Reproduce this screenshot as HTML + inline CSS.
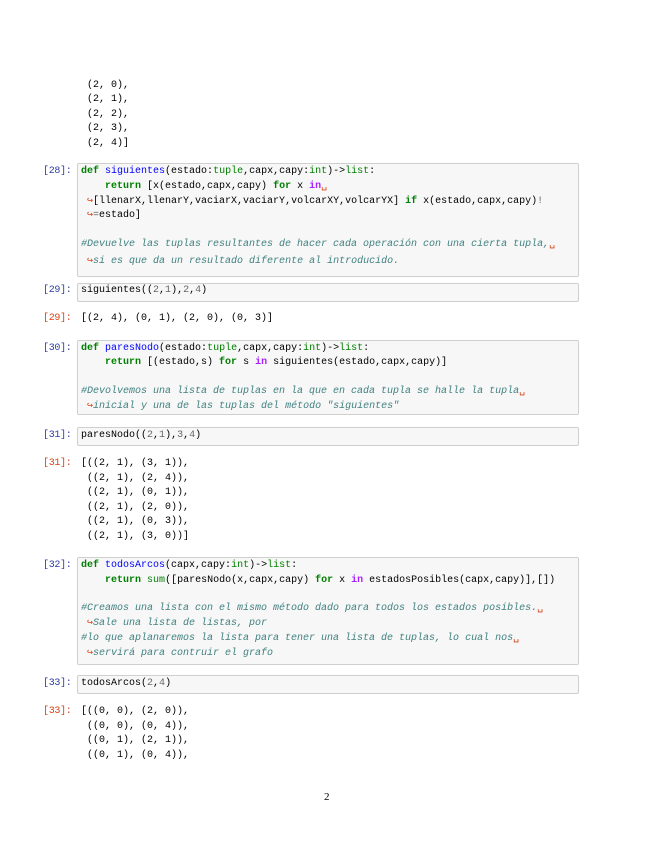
<!DOCTYPE html>
<html><head><meta charset="utf-8"><style>
body{margin:0;width:655px;height:848px;background:#fff;position:relative;font-family:"Liberation Mono",monospace;font-size:10px;color:#000}
.l{position:absolute;left:81px;line-height:14px;white-space:pre}
.p{position:absolute;left:43px;line-height:14px;white-space:pre;color:#303F9F;letter-spacing:-0.3px}
.o{color:#D84315}
.b{position:absolute;left:77px;width:500px;background:#f7f7f7;border:1px solid #cfcfcf;border-radius:2px}
.k{color:#008000;font-weight:bold}
.f{color:#0000FF}
.bi{color:#008000}
.n{color:#666}
.i{color:#AA22FF;font-weight:bold}
.c{color:#408080;font-style:italic}
.a{color:#d84315}
</style></head><body>
<div class="l" style="top:79px"> (2, 0),</div>
<div class="l" style="top:93px"> (2, 1),</div>
<div class="l" style="top:108px"> (2, 2),</div>
<div class="l" style="top:122px"> (2, 3),</div>
<div class="l" style="top:137px"> (2, 4)]</div>

<div class="b" style="top:163px;height:112px"></div>
<div class="p" style="top:165px">[28]:</div>
<div class="l" style="top:165px"><span class="k">def</span> <span class="f">siguientes</span>(estado:<span class="bi">tuple</span>,capx,capy:<span class="bi">int</span>)-&gt;<span class="bi">list</span>:</div>
<div class="l" style="top:180px">    <span class="k">return</span> [x(estado,capx,capy) <span class="k">for</span> x <span class="i">in</span><span class="a">␣</span></div>
<div class="l" style="top:195px"><span class="a"> ↪</span>[llenarX,llenarY,vaciarX,vaciarY,volcarXY,volcarYX] <span class="k">if</span> x(estado,capx,capy)<span class="n">!</span></div>
<div class="l" style="top:209px"><span class="a"> ↪</span><span class="n">=</span>estado]</div>
<div class="l c" style="top:238px">#Devuelve las tuplas resultantes de hacer cada operación con una cierta tupla,<span class="a" style="font-style:normal">␣</span></div>
<div class="l c" style="top:255px"><span class="a"> ↪</span>si es que da un resultado diferente al introducido.</div>

<div class="b" style="top:283px;height:17px"></div>
<div class="p" style="top:284px">[29]:</div>
<div class="l" style="top:284px">siguientes((<span class="n">2</span>,<span class="n">1</span>),<span class="n">2</span>,<span class="n">4</span>)</div>
<div class="p o" style="top:312px">[29]:</div>
<div class="l" style="top:312px">[(2, 4), (0, 1), (2, 0), (0, 3)]</div>

<div class="b" style="top:340px;height:73px"></div>
<div class="p" style="top:342px">[30]:</div>
<div class="l" style="top:342px"><span class="k">def</span> <span class="f">paresNodo</span>(estado:<span class="bi">tuple</span>,capx,capy:<span class="bi">int</span>)-&gt;<span class="bi">list</span>:</div>
<div class="l" style="top:356px">    <span class="k">return</span> [(estado,s) <span class="k">for</span> s <span class="i">in</span> siguientes(estado,capx,capy)]</div>
<div class="l c" style="top:385px">#Devolvemos una lista de tuplas en la que en cada tupla se halle la tupla<span class="a" style="font-style:normal">␣</span></div>
<div class="l c" style="top:400px"><span class="a"> ↪</span>inicial y una de las tuplas del método "siguientes"</div>

<div class="b" style="top:427px;height:17px"></div>
<div class="p" style="top:429px">[31]:</div>
<div class="l" style="top:429px">paresNodo((<span class="n">2</span>,<span class="n">1</span>),<span class="n">3</span>,<span class="n">4</span>)</div>
<div class="p o" style="top:457px">[31]:</div>
<div class="l" style="top:457px">[((2, 1), (3, 1)),</div>
<div class="l" style="top:472px"> ((2, 1), (2, 4)),</div>
<div class="l" style="top:486px"> ((2, 1), (0, 1)),</div>
<div class="l" style="top:501px"> ((2, 1), (2, 0)),</div>
<div class="l" style="top:515px"> ((2, 1), (0, 3)),</div>
<div class="l" style="top:530px"> ((2, 1), (3, 0))]</div>

<div class="b" style="top:557px;height:106px"></div>
<div class="p" style="top:559px">[32]:</div>
<div class="l" style="top:559px"><span class="k">def</span> <span class="f">todosArcos</span>(capx,capy:<span class="bi">int</span>)-&gt;<span class="bi">list</span>:</div>
<div class="l" style="top:574px">    <span class="k">return</span> <span class="bi">sum</span>([paresNodo(x,capx,capy) <span class="k">for</span> x <span class="i">in</span> estadosPosibles(capx,capy)],[])</div>
<div class="l c" style="top:602px">#Creamos una lista con el mismo método dado para todos los estados posibles.<span class="a" style="font-style:normal">␣</span></div>
<div class="l c" style="top:617px"><span class="a"> ↪</span>Sale una lista de listas, por</div>
<div class="l c" style="top:632px">#lo que aplanaremos la lista para tener una lista de tuplas, lo cual nos<span class="a" style="font-style:normal">␣</span></div>
<div class="l c" style="top:647px"><span class="a"> ↪</span>servirá para contruir el grafo</div>

<div class="b" style="top:675px;height:17px"></div>
<div class="p" style="top:677px">[33]:</div>
<div class="l" style="top:677px">todosArcos(<span class="n">2</span>,<span class="n">4</span>)</div>
<div class="p o" style="top:705px">[33]:</div>
<div class="l" style="top:705px">[((0, 0), (2, 0)),</div>
<div class="l" style="top:720px"> ((0, 0), (0, 4)),</div>
<div class="l" style="top:734px"> ((0, 1), (2, 1)),</div>
<div class="l" style="top:749px"> ((0, 1), (0, 4)),</div>

<div style="position:absolute;left:324px;top:791px;font-family:'Liberation Serif',serif;font-size:11px">2</div>
</body></html>
